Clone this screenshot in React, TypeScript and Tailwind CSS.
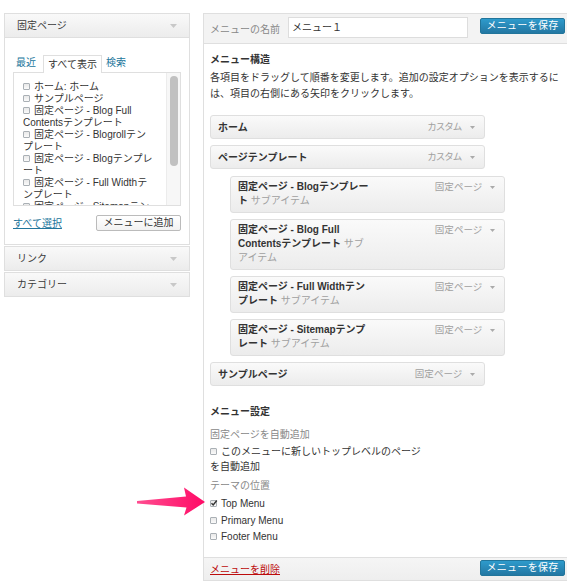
import React from "react";

const FONT = "font-['Liberation_Sans','Noto_Sans_CJK_JP',sans-serif]";

function Cb({ checked = false }: { checked?: boolean }) {
  return (
    <span className="relative inline-block w-[7px] h-[7px] border border-[#aab0b5] rounded-[1px] bg-gradient-to-b from-[#e9e9e9] to-[#fafafa] align-[-0px] mr-[4px]">
      {checked && (
        <svg viewBox="0 0 8 8" className="absolute left-[-1px] top-[-2px] w-[8px] h-[8px]">
          <path d="M1.5 4.2 L3.2 6 L6.8 1.5" fill="none" stroke="#333" strokeWidth="1.4" />
        </svg>
      )}
    </span>
  );
}

function Tri({ c = "#aaa", w = 5, h = 3 }: { c?: string; w?: number; h?: number }) {
  return (
    <svg width={w} height={h} viewBox={`0 0 ${w} ${h}`} className="inline-block">
      <path d={`M0 0 L${w} 0 L${w / 2} ${h} Z`} fill={c} />
    </svg>
  );
}

function SideHead({ label }: { label: string }) {
  return (
    <div className="h-[25px] border border-[#dfdfdf] bg-gradient-to-b from-[#f9f9f9] to-[#ececec] flex items-center justify-between pl-[12px] pr-[12px] text-[10px] text-[#3a3a3a]">
      <span>{label}</span>
      <Tri c="#c8c8c8" w={7} h={4} />
    </div>
  );
}

const LABEL = "flex items-center gap-[8px] text-[9.5px] text-[#a0a0a0] [font-feature-settings:'palt']";
const SUB_FIRST = "mt-[1px] ml-[20px]";
const SUB_REST = "ml-[20px]";

function TopBar({ title, type }: { title: string; type: string }) {
  return (
    <div className="w-[275px] h-[24px] border border-[#dfdfdf] rounded-[3px] bg-gradient-to-b from-[#fafafa] to-[#ececec] flex items-center justify-between pl-[7px] pr-[9px]">
      <span className="font-bold text-[10px] text-[#333]">{title}</span>
      <span className={LABEL}>
        {type}
        <Tri />
      </span>
    </div>
  );
}

function SubBar({ lines, first = false }: { lines: React.ReactNode[]; first?: boolean }) {
  return (
    <div className={first ? SUB_FIRST : SUB_REST}>
      <div className="w-[275px] border border-[#dfdfdf] rounded-[3px] bg-gradient-to-b from-[#fafafa] to-[#ececec] flex justify-between pl-[7px] pr-[9px] pt-[3px] pb-[4px]">
        <div className="text-[10px] leading-[14px] text-[#333] whitespace-nowrap">
          {lines.map((l, i) => (
            <div key={i}>{l}</div>
          ))}
        </div>
        <span className={LABEL + " h-[14px]"}>
          固定ページ
          <Tri />
        </span>
      </div>
    </div>
  );
}

const B = ({ children }: { children: React.ReactNode }) => <span className="font-bold">{children}</span>;
const G = ({ children }: { children: React.ReactNode }) => <span className="text-[#a0a0a0]">{children}</span>;

export default function App() {
  const list: [boolean, string][] = [
    [true, "ホーム: ホーム"],
    [true, "サンプルページ"],
    [true, "固定ページ - Blog Full"],
    [false, "Contentsテンプレート"],
    [true, "固定ページ - Blogrollテン"],
    [false, "プレート"],
    [true, "固定ページ - Blogテンプレ"],
    [false, "ート"],
    [true, "固定ページ - Full Widthテ"],
    [false, "ンプレート"],
    [true, "固定ページ - Sitemapテン"],
    [false, "プレート"],
  ];
  return (
    <div className={FONT + " relative w-[567px] h-[588px] bg-white flex overflow-hidden text-[#333]"}>
      {/* Left column */}
      <div className="mt-[13px] ml-[4px] w-[186px]">
        <SideHead label="固定ページ" />
        <div className="border-x border-b border-[#dfdfdf] bg-white pt-[16px] pb-[13px] px-[8px]">
          <div className="flex items-end text-[10px] h-[18px]">
            <span className="text-[#21759b] pl-[3px] pr-[7px] pb-[2px]">最近</span>
            <span className="h-[18px] px-[4px] border-x border-t border-[#dfdfdf] bg-white relative z-10 -mb-px leading-[16px] pt-[1px] text-[#333]">
              すべて表示
            </span>
            <span className="text-[#21759b] pl-[4px] pb-[2px]">検索</span>
          </div>
          <div className="relative h-[134px] border border-[#dfdfdf] overflow-hidden flex">
            <div className="flex-1 pt-[8px] pl-[9px] text-[10px] leading-[12px] text-[#333] whitespace-nowrap overflow-hidden">
              {list.map(([cb, t], i) => (
                <div key={i}>
                  {cb && <Cb />}
                  {t}
                </div>
              ))}
            </div>
            <div className="w-[14px] bg-[#f7f7f7] border-l border-[#ececec] flex justify-center pt-[3px]">
              <div className="w-[8px] h-[90px] rounded-full bg-[#c1c1c1]" />
            </div>
          </div>
          <div className="mt-[9px] flex items-center justify-between">
            <span className="text-[10px] text-[#21759b] underline">すべて選択</span>
            <span className="h-[16px] w-[85px] border border-[#bbb] rounded-[2px] bg-gradient-to-b from-white to-[#f2f2f2] text-[10px] leading-[14px] text-center text-[#333]">
              メニューに追加
            </span>
          </div>
        </div>
        <div className="mt-[1px]">
          <SideHead label="リンク" />
        </div>
        <div className="mt-[1px]">
          <SideHead label="カテゴリー" />
        </div>
      </div>

      {/* Right column */}
      <div className="mt-[13px] ml-[13px] flex-1 self-start border-l border-t border-[#dfdfdf]">
        <div className="h-[30px] bg-[#f3f3f3] border-b border-[#dfdfdf] flex items-start pl-[6px]">
          <span className="mt-[8px] text-[10px] text-[#888]">メニューの名前</span>
          <div className="ml-[8px] mt-[3px] w-[180px] h-[21px] border border-[#dddddd] bg-white text-[10px] leading-[19px] pl-[3px] text-[#333]">
            メニュー１
          </div>
          <div className="ml-[12px] mt-[4px] w-[85px] h-[16px] border border-[#21759b] rounded-[2px] bg-gradient-to-b from-[#2e9bcc] to-[#2377a3] text-white text-[10px] leading-[14px] text-center tracking-[0.3px]">
            メニューを保存
          </div>
        </div>

        <div className="pl-[6px] pt-[9px] pb-[13px]">
          <div className="font-bold text-[10px] leading-[14px]">メニュー構造</div>
          <div className="mt-[3px] text-[10px] leading-[16px] whitespace-nowrap">
            各項目をドラッグして順番を変更します。追加の設定オプションを表示するに
            <br />
            は、項目の右側にある矢印をクリックします。
          </div>

          <div className="mt-[13px] flex flex-col gap-[6px]">
            <TopBar title="ホーム" type="カスタム" />
            <TopBar title="ページテンプレート" type="カスタム" />
            <SubBar
              first
              lines={[
                <B>固定ページ - Blogテンプレー</B>,
                <>
                  <B>ト</B> <G>サブアイテム</G>
                </>,
              ]}
            />
            <SubBar
              lines={[
                <B>固定ページ - Blog Full</B>,
                <>
                  <B>Contentsテンプレート</B> <G>サブ</G>
                </>,
                <G>アイテム</G>,
              ]}
            />
            <SubBar
              lines={[
                <B>固定ページ - Full Widthテン</B>,
                <>
                  <B>プレート</B> <G>サブアイテム</G>
                </>,
              ]}
            />
            <SubBar
              lines={[
                <B>固定ページ - Sitemapテンプ</B>,
                <>
                  <B>レート</B> <G>サブアイテム</G>
                </>,
              ]}
            />
            <TopBar title="サンプルページ" type="固定ページ" />
          </div>

          <div className="mt-[19px] font-bold text-[10px] leading-[14px]">メニュー設定</div>
          <div className="mt-[9px] text-[10px] leading-[14px] text-[#888]">固定ページを自動追加</div>
          <div className="mt-[2px] text-[10px] leading-[15px] whitespace-nowrap">
            <Cb />
            このメニューに新しいトップレベルのページ
            <br />
            を自動追加
          </div>
          <div className="mt-[5px] text-[10px] leading-[14px] text-[#888]">テーマの位置</div>
          <div className="mt-[2px] text-[10px]">
            <div className="h-[17px] leading-[17px]">
              <Cb checked />
              Top Menu
            </div>
            <div className="h-[17px] leading-[17px]">
              <Cb />
              Primary Menu
            </div>
            <div className="h-[15px] leading-[15px]">
              <Cb />
              Footer Menu
            </div>
          </div>
        </div>

        <div className="h-[24px] border-y border-[#dfdfdf] bg-gradient-to-b from-[#f5f5f5] to-[#eeeeee] flex items-start justify-between pl-[6px] pr-[2px]">
          <span className="mt-[4px] text-[10px] text-[#bc0b0b] underline">メニューを削除</span>
          <div className="mt-[2px] w-[85px] h-[16px] border border-[#21759b] rounded-[2px] bg-gradient-to-b from-[#2e9bcc] to-[#2377a3] text-white text-[10px] leading-[14px] text-center tracking-[0.3px]">
            メニューを保存
          </div>
        </div>
      </div>

      {/* Pink arrow annotation */}
      <svg className="absolute left-[134px] top-[484px]" width="74" height="34" viewBox="134 484 74 34">
        <defs>
          <linearGradient id="pa" x1="0" x2="1" y1="0" y2="0">
            <stop offset="0" stopColor="#ff4d90" />
            <stop offset="1" stopColor="#ff0a66" />
          </linearGradient>
        </defs>
        <path
          d="M137 501 L186 496.5 L184 487.5 L205 502 L184 515.5 L186.5 507.5 L137 503.5 Z"
          fill="url(#pa)"
        />
      </svg>
    </div>
  );
}
